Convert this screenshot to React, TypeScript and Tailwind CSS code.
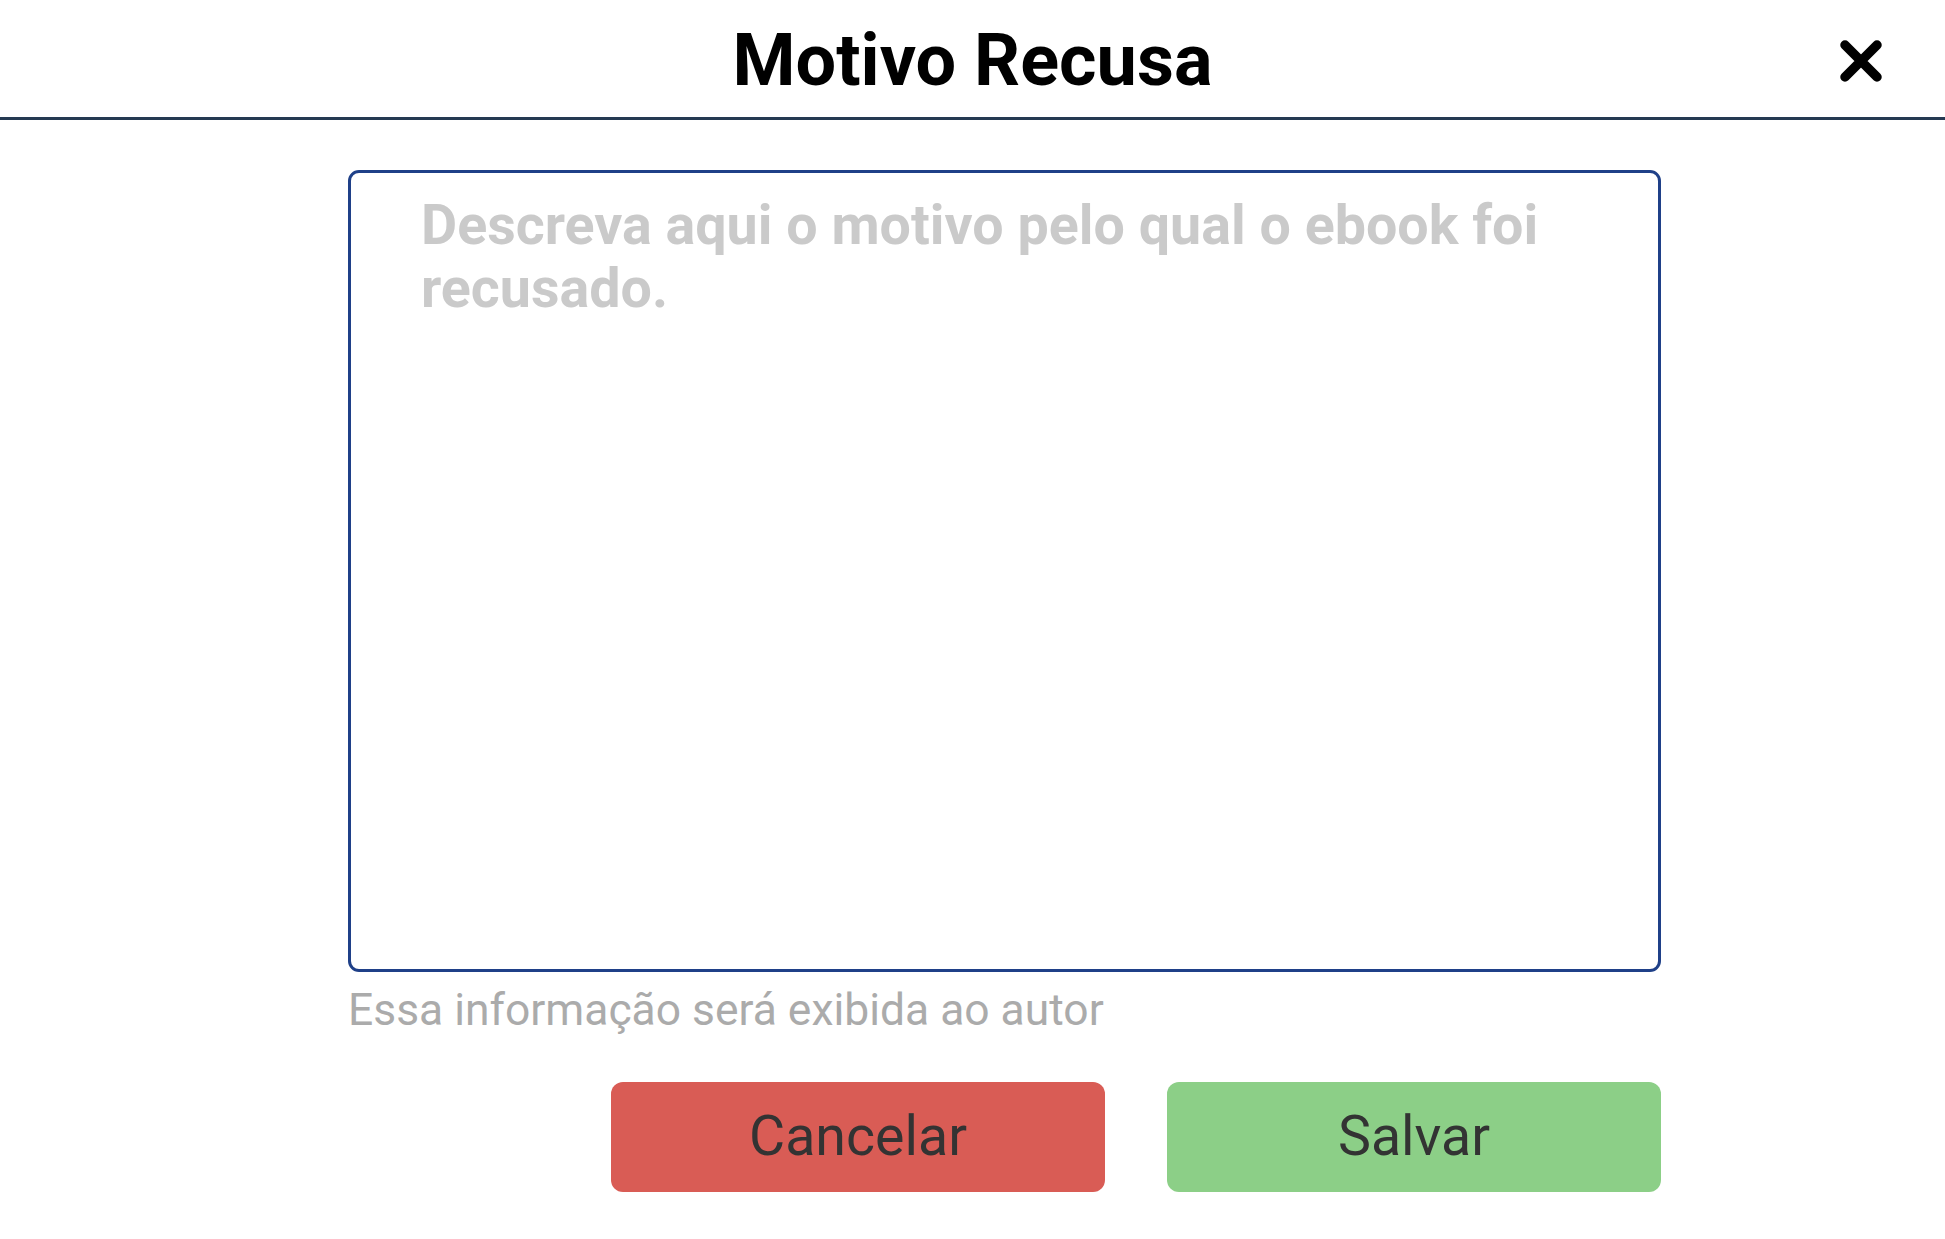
import { useState } from "react";

const FONT = "font-['Roboto','Noto_Sans',sans-serif]";

function CloseIcon() {
  return (
    <svg width="46" height="46" viewBox="0 0 46 46" aria-hidden="true">
      <path
        d="M7 7 L39 39 M39 7 L7 39"
        stroke="#000"
        strokeWidth="9.5"
        strokeLinecap="round"
        fill="none"
      />
    </svg>
  );
}

export default function App() {
  const [reason, setReason] = useState("");

  return (
    <div className={`${FONT} min-h-screen w-full bg-white`}>
      {/* Header */}
      <header className="relative flex h-[120px] items-center justify-center border-b-[3px] border-[#253a52]">
        <h1 className="pt-[5px] text-[72px] font-bold leading-[84px] text-black">
          Motivo Recusa
        </h1>
        <button
          type="button"
          aria-label="Fechar"
          className="absolute right-[61px] top-[38px] flex items-center justify-center"
        >
          <CloseIcon />
        </button>
      </header>

      {/* Body */}
      <div className="ml-[348px] flex w-[1313px] flex-col pt-[50px]">
        <textarea
          value={reason}
          onChange={(e) => setReason(e.target.value)}
          placeholder="Descreva aqui o motivo pelo qual o ebook foi recusado."
          className="h-[802px] w-full resize-none rounded-[11px] border-[3px] border-[#1f4088] bg-white pl-[70px] pr-[60px] pt-[21px] text-[55.6px] font-bold leading-[63px] text-[#333] outline-none placeholder:text-[#cacaca]"
        />
        <p className="mt-[12px] text-[44.4px] leading-[52px] text-[#ababab]">
          Essa informação será exibida ao autor
        </p>

        <div className="mt-[46px] flex justify-end gap-[62px]">
          <button
            type="button"
            className="flex h-[110px] w-[494px] items-center justify-center rounded-[12px] bg-[#d95c55] text-[55.5px] text-[#333]"
          >
            Cancelar
          </button>
          <button
            type="button"
            className="flex h-[110px] w-[494px] items-center justify-center rounded-[12px] bg-[#8ccf87] text-[55.5px] text-[#333]"
          >
            Salvar
          </button>
        </div>
      </div>
    </div>
  );
}
